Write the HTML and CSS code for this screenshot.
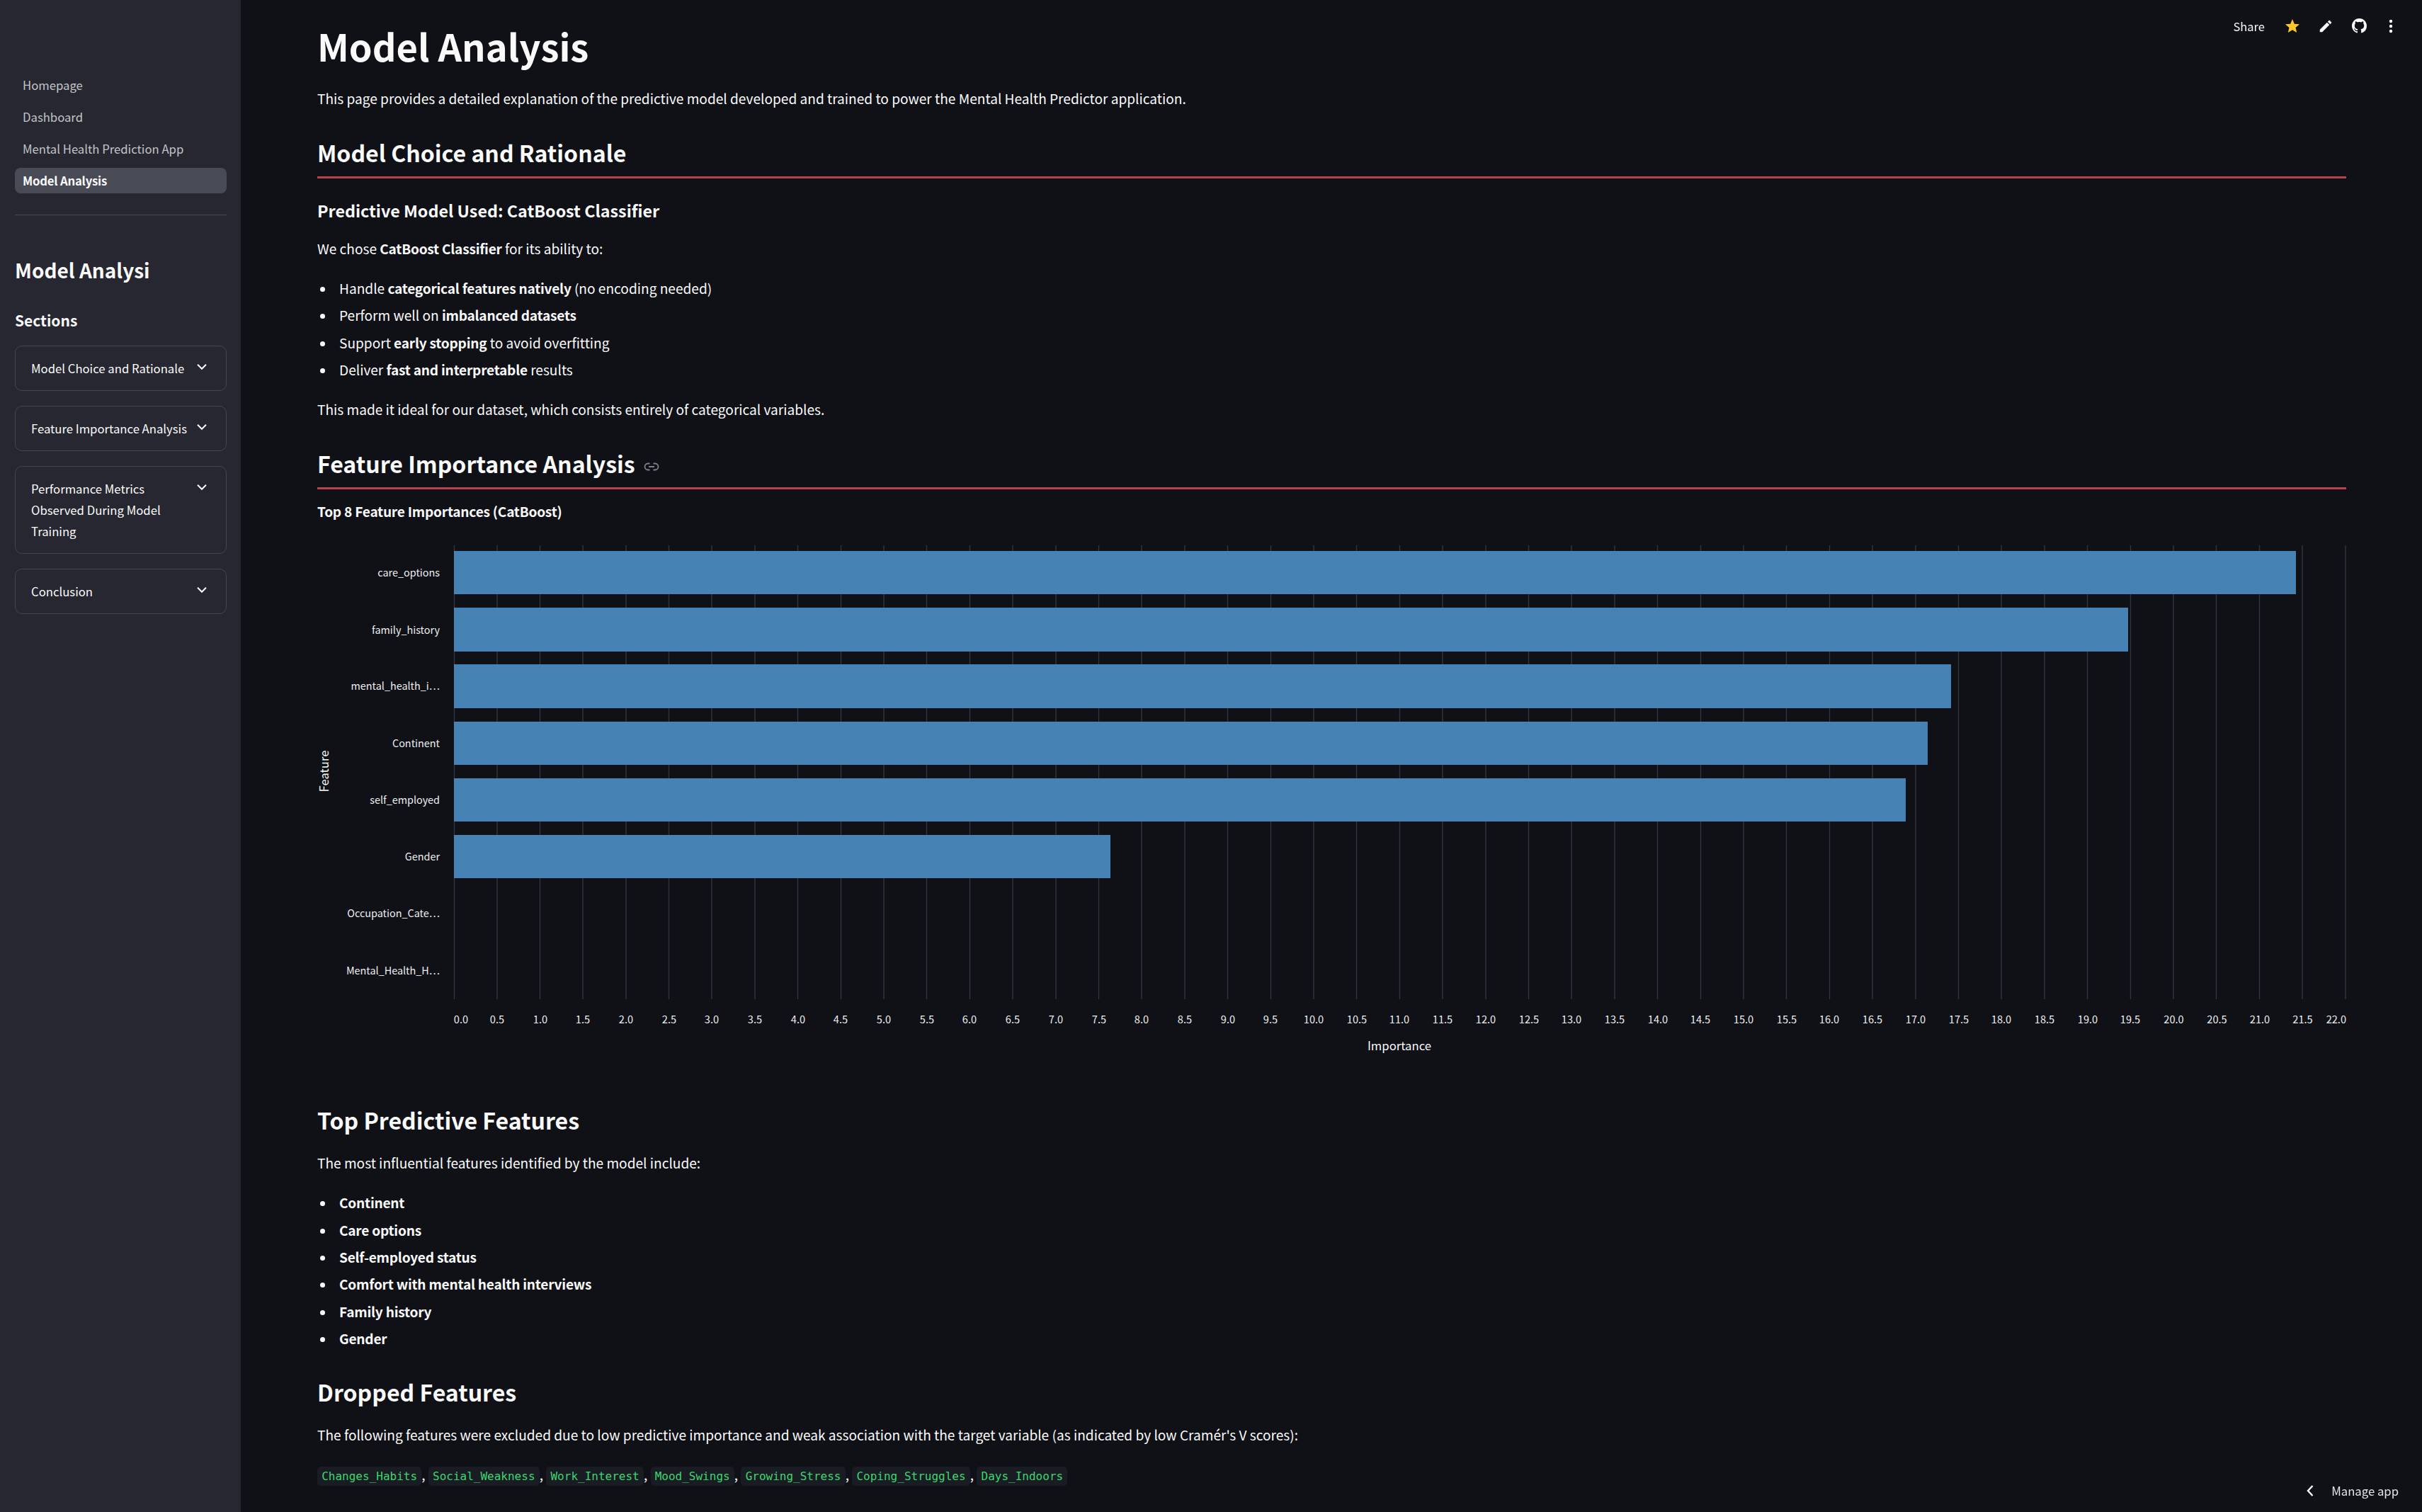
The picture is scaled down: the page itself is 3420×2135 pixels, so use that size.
FILE: index.html
```html
<!DOCTYPE html>
<html lang="en">
<head>
    <meta charset="UTF-8">
    <title>Model Analysis</title>
    <link rel="stylesheet" href="styles.css">
</head>
<body>
    <div class="app">
        <aside class="sidebar">
            <ul class="nav">
                <li class="nav-item">Homepage</li>
                <li class="nav-item">Dashboard</li>
                <li class="nav-item">Mental Health Prediction App</li>
                <li class="nav-item active">Model Analysis</li>
            </ul>
            <div class="nav-line"></div>
            <h2 class="side-title">Model Analysi</h2>
            <h3 class="side-sub">Sections</h3>
            <div class="expander">
                <span>Model Choice and Rationale</span>
                <svg class="chev" viewBox="0 0 24 24"><path d="M5.5 8.5L12 15l6.5-6.5"/></svg>
            </div>
            <div class="expander">
                <span>Feature Importance Analysis</span>
                <svg class="chev" viewBox="0 0 24 24"><path d="M5.5 8.5L12 15l6.5-6.5"/></svg>
            </div>
            <div class="expander">
                <span>Performance Metrics Observed During Model Training</span>
                <svg class="chev" viewBox="0 0 24 24"><path d="M5.5 8.5L12 15l6.5-6.5"/></svg>
            </div>
            <div class="expander">
                <span>Conclusion</span>
                <svg class="chev" viewBox="0 0 24 24"><path d="M5.5 8.5L12 15l6.5-6.5"/></svg>
            </div>
        </aside>

        <main class="main">
            <h1 class="title">Model Analysis</h1>
            <p class="intro">This page provides a detailed explanation of the predictive model developed and trained to power the Mental Health Predictor application.</p>

            <h2 class="head first">Model Choice and Rationale</h2>
            <div class="red-line"></div>
            <h3 class="sub">Predictive Model Used: CatBoost Classifier</h3>
            <p class="after-sub">We chose <b>CatBoost Classifier</b> for its ability to:</p>
            <ul class="points">
                <li>Handle <b>categorical features natively</b> (no encoding needed)</li>
                <li>Perform well on <b>imbalanced datasets</b></li>
                <li>Support <b>early stopping</b> to avoid overfitting</li>
                <li>Deliver <b>fast and interpretable</b> results</li>
            </ul>
            <p class="after-list">This made it ideal for our dataset, which consists entirely of categorical variables.</p>

            <h2 class="head first">Feature Importance Analysis
                <svg class="link-icon" viewBox="0 0 24 24"><path d="M9.5 7.5H7a4.5 4.5 0 0 0 0 9h2.5M14.500 7.500H17a4.500 4.500 0 0 1 0 9h-2.500M8 12h8"/></svg>
            </h2>
            <div class="red-line"></div>
            <p class="chart-title"><b>Top 8 Feature Importances (CatBoost)</b></p>

            <svg class="chart" viewBox="448 760 2865 740">
                <path class="grid" d="M641.500 770V1411M702 770V1411M762.500 770V1411M823 770V1411M884 770V1411M944.500 770V1411M1005 770V1411M1066 770V1411M1126.500 770V1411M1187.500 770V1411M1248 770V1411M1308.500 770V1411M1369.500 770V1411M1430 770V1411M1491 770V1411M1551.500 770V1411M1612 770V1411M1673 770V1411M1733.500 770V1411M1794.500 770V1411M1855 770V1411M1915.500 770V1411M1976.500 770V1411M2037 770V1411M2098 770V1411M2158.500 770V1411M2219 770V1411M2280 770V1411M2340.500 770V1411M2401.500 770V1411M2462 770V1411M2522.500 770V1411M2583.500 770V1411M2644 770V1411M2705 770V1411M2765.500 770V1411M2826 770V1411M2887 770V1411M2947.500 770V1411M3008.500 770V1411M3069 770V1411M3129.500 770V1411M3190.500 770V1411M3251 770V1411M3312 770V1411"/>

                <rect class="bar" x="641" y="778" width="2601" height="61"/>
                <rect class="bar" x="641" y="858" width="2364" height="62"/>
                <rect class="bar" x="641" y="938" width="2114" height="62"/>
                <rect class="bar" x="641" y="1019" width="2081" height="61"/>
                <rect class="bar" x="641" y="1099" width="2050" height="61"/>
                <rect class="bar" x="641" y="1179" width="927" height="61"/>

                <g class="y-labels">
                    <text x="621" y="814">care_options</text>
                    <text x="621" y="895">family_history</text>
                    <text x="621" y="974">mental_health_i…</text>
                    <text x="621" y="1055">Continent</text>
                    <text x="621" y="1135">self_employed</text>
                    <text x="621" y="1215">Gender</text>
                    <text x="621" y="1295">Occupation_Cate…</text>
                    <text x="621" y="1376">Mental_Health_H…</text>
                </g>

                <g class="x-labels">
                    <text x="651" y="1445">0.0</text>
                    <text x="702" y="1445">0.5</text>
                    <text x="763" y="1445">1.0</text>
                    <text x="823" y="1445">1.5</text>
                    <text x="884" y="1445">2.0</text>
                    <text x="945" y="1445">2.5</text>
                    <text x="1005" y="1445">3.0</text>
                    <text x="1066" y="1445">3.5</text>
                    <text x="1127" y="1445">4.0</text>
                    <text x="1187" y="1445">4.5</text>
                    <text x="1248" y="1445">5.0</text>
                    <text x="1309" y="1445">5.5</text>
                    <text x="1369" y="1445">6.0</text>
                    <text x="1430" y="1445">6.5</text>
                    <text x="1491" y="1445">7.0</text>
                    <text x="1552" y="1445">7.5</text>
                    <text x="1612" y="1445">8.0</text>
                    <text x="1673" y="1445">8.5</text>
                    <text x="1734" y="1445">9.0</text>
                    <text x="1794" y="1445">9.5</text>
                    <text x="1855" y="1445">10.0</text>
                    <text x="1916" y="1445">10.5</text>
                    <text x="1976" y="1445">11.0</text>
                    <text x="2037" y="1445">11.5</text>
                    <text x="2098" y="1445">12.0</text>
                    <text x="2159" y="1445">12.5</text>
                    <text x="2219" y="1445">13.0</text>
                    <text x="2280" y="1445">13.5</text>
                    <text x="2341" y="1445">14.0</text>
                    <text x="2401" y="1445">14.5</text>
                    <text x="2462" y="1445">15.0</text>
                    <text x="2523" y="1445">15.5</text>
                    <text x="2583" y="1445">16.0</text>
                    <text x="2644" y="1445">16.5</text>
                    <text x="2705" y="1445">17.0</text>
                    <text x="2766" y="1445">17.5</text>
                    <text x="2826" y="1445">18.0</text>
                    <text x="2887" y="1445">18.5</text>
                    <text x="2948" y="1445">19.0</text>
                    <text x="3008" y="1445">19.5</text>
                    <text x="3069.500" y="1445">20.0</text>
                    <text x="3130.500" y="1445">20.5</text>
                    <text x="3191" y="1445">21.0</text>
                    <text x="3251.500" y="1445">21.5</text>
                    <text class="last-tick" x="3313" y="1445">22.0</text>
                </g>

                <text class="axis-title" x="1976" y="1483">Importance</text>
                <text class="axis-title" transform="translate(464 1089) rotate(-90)">Feature</text>
            </svg>

            <h2 class="head after-chart">Top Predictive Features</h2>
            <p class="after-head">The most influential features identified by the model include:</p>
            <ul class="points">
                <li><b>Continent</b></li>
                <li><b>Care options</b></li>
                <li><b>Self-employed status</b></li>
                <li><b>Comfort with mental health interviews</b></li>
                <li><b>Family history</b></li>
                <li><b>Gender</b></li>
            </ul>

            <h2 class="head after-points">Dropped Features</h2>
            <p class="after-head">The following features were excluded due to low predictive importance and weak association with the target variable (as indicated by low Cramér's V scores):</p>
            <p class="codes"><code>Changes_Habits</code>, <code>Social_Weakness</code>, <code>Work_Interest</code>, <code>Mood_Swings</code>, <code>Growing_Stress</code>, <code>Coping_Struggles</code>, <code>Days_Indoors</code></p>
        </main>
    </div>

    <div class="toolbar">
        <span class="share">Share</span>
        <span class="tool"><svg class="star" viewBox="0 0 24 24"><path d="M12 17.270L18.180 21l-1.640-7.030L22 9.240l-7.190-.610L12 2 9.190 8.630 2 9.240l5.460 4.730L5.820 21z"/></svg></span>
        <span class="tool"><svg class="pencil" viewBox="0 0 24 24"><path d="M3 17.250V21h3.750L17.810 9.940l-3.750-3.750L3 17.250zM20.710 7.040c.39-.39.39-1.020 0-1.410l-2.340-2.340c-.39-.39-1.020-.39-1.410 0l-1.830 1.830 3.750 3.750 1.830-1.830z"/></svg></span>
        <span class="tool"><svg class="github" viewBox="0 0 16 16"><path d="M8 0C3.580 0 0 3.580 0 8c0 3.540 2.290 6.530 5.470 7.590.4.070.55-.17.55-.38 0-.19-.01-.82-.01-1.490-2.010.37-2.530-.49-2.690-.94-.09-.23-.48-.94-.82-1.130-.28-.15-.68-.52-.01-.53.63-.01 1.080.58 1.230.82.72 1.210 1.870.87 2.330.66.07-.52.28-.87.51-1.070-1.780-.2-3.640-.89-3.640-3.950 0-.87.31-1.590.82-2.150-.08-.2-.36-1.020.08-2.120 0 0 .67-.21 2.200.82.64-.18 1.320-.27 2-.27.68 0 1.360.09 2 .27 1.530-1.040 2.200-.82 2.200-.82.44 1.100.16 1.920.08 2.120.51.56.82 1.270.82 2.150 0 3.070-1.870 3.750-3.650 3.950.29.25.54.73.54 1.480 0 1.070-.01 1.930-.01 2.200 0 .21.15.46.55.38A8.013 8.013 0 0016 8c0-4.420-3.580-8-8-8z"/></svg></span>
        <span class="tool tool-dots"><svg class="dots" viewBox="0 0 24 24"><circle cx="12" cy="5" r="2.200"/><circle cx="12" cy="12" r="2.200"/><circle cx="12" cy="19" r="2.200"/></svg></span>
    </div>

    <div class="manage">
        <svg class="manage-chev" viewBox="0 0 12 20"><path d="M9.500 3L3 10l6.500 7"/></svg>
        <span>Manage app</span>
    </div>
</body>
</html>
```
FILE: styles.css
```css
*{
    margin: 0;
    padding: 0;
    box-sizing: border-box;
}
html,body{
    height: 100%;
    overflow: hidden;
}
body{
    background: #0f1117;
    color: #fafafa;
    font-family: "Noto Sans CJK SC", "Noto Sans", sans-serif;
    font-size: 19.100px;
    line-height: 34px;
}
b{
    font-weight: 600;
    letter-spacing: -0.22px;
}
.app{
    display: flex;
    height: 100%;
}

/* sidebar */
.sidebar{
    width: 340px;
    flex-shrink: 0;
    background: #262730;
    padding: 102px 20px 0 21px;
}
.nav{
    list-style: none;
    display: flex;
    flex-direction: column;
    gap: 9px;
}
.nav-item{
    height: 36px;
    padding-left: 11px;
    border-radius: 8px;
    font-size: 16.700px;
    line-height: 36px;
    color: #c3c4c8;
}
.nav-item.active{
    background: #484a56;
    color: #fafafa;
    font-weight: 600;
    letter-spacing: -0.2px;
}
.nav-line{
    height: 1px;
    margin-top: 30px;
    background: #474852;
}
.side-title{
    margin-top: 55px;
    font-size: 28px;
    line-height: 44px;
    font-weight: 600;
}
.side-sub{
    margin-top: 31px;
    font-size: 21px;
    line-height: 36px;
    font-weight: 600;
}
.expander{
    display: flex;
    justify-content: space-between;
    align-items: flex-start;
    margin-bottom: 21px;
    padding: 16px 23px 16px 22px;
    border: 1px solid #44454f;
    border-radius: 10px;
    font-size: 16.700px;
    line-height: 30px;
}
.side-sub + .expander{
    margin-top: 18px;
}
.expander span{
    max-width: 222px;
}
.chev{
    width: 22px;
    height: 22px;
    margin-top: 2px;
    flex-shrink: 0;
    fill: none;
    stroke: #fafafa;
    stroke-width: 2.200;
}

/* main column */
.main{
    flex: 1;
    min-width: 0;
    padding: 26px 107px 0 108px;
}
.title{
    font-size: 52.500px;
    line-height: 76px;
    font-weight: 700;
}
.intro{
    margin-top: 20px;
}
.head{
    font-size: 32.100px;
    line-height: 50px;
    font-weight: 600;
}
.head.first{
    margin-top: 34px;
}
.head.after-chart{
    margin-top: 56px;
}
.head.after-points{
    margin-top: 33px;
}
.link-icon{
    width: 24px;
    height: 24px;
    margin-left: 4px;
    vertical-align: -3px;
    fill: none;
    stroke: #7f8188;
    stroke-width: 1.800;
}
.red-line{
    height: 3px;
    margin-top: 9px;
    background: #b8424a;
}
.sub{
    margin-top: 25px;
    font-size: 23.300px;
    line-height: 40px;
    font-weight: 600;
}
.after-sub{
    margin-top: 17px;
}
.after-list{
    margin-top: 22px;
}
.after-head{
    margin-top: 19px;
}
.points{
    list-style: none;
    margin-top: 22px;
    padding-left: 31px;
}
.points li + li{
    margin-top: 4.400px;
}
.points li::before{
    content: "";
    display: inline-block;
    width: 7px;
    height: 7px;
    margin-left: -27.500px;
    margin-right: 20.500px;
    border-radius: 50%;
    background: #fafafa;
    vertical-align: 3px;
}
.chart-title{
    margin-top: 14px;
}
.codes{
    margin-top: 22px;
}
code{
    display: inline-block;
    height: 27px;
    padding: 0 6.200px;
    border-radius: 5px;
    background: #1a1c24;
    color: #3dd56d;
    font-family: "DejaVu Sans Mono", "Liberation Mono", monospace;
    font-size: 16px;
    line-height: 27px;
}

/* chart */
.chart{
    display: block;
    width: 2865px;
    height: 740px;
    margin-top: 21px;
    overflow: visible;
}
.grid{
    fill: none;
    stroke: #32353d;
    stroke-width: 1.400;
}
.bar{
    fill: #4682b4;
}
.y-labels text{
    fill: #eeeff0;
    font-size: 14.400px;
    text-anchor: end;
}
.x-labels text{
    fill: #eeeff0;
    font-size: 14.600px;
    text-anchor: middle;
}
.x-labels .last-tick{
    text-anchor: end;
}
.axis-title{
    fill: #fafafa;
    font-size: 16.700px;
    text-anchor: middle;
}

/* overlays */
.toolbar{
    position: fixed;
    top: 13px;
    right: 20px;
    display: flex;
    align-items: center;
    height: 47px;
    font-size: 16.500px;
}
.share{
    margin-right: 15px;
}
.tool{
    display: flex;
    align-items: center;
    justify-content: center;
    width: 47.500px;
    height: 47px;
}
.tool-dots{
    margin-left: -3px;
}
.star{
    width: 24px;
    height: 24px;
    fill: #ffc72b;
}
.pencil{
    width: 22px;
    height: 22px;
    fill: #fafafa;
}
.github{
    width: 21px;
    height: 21px;
    fill: #fafafa;
}
.dots{
    width: 24px;
    height: 24px;
    fill: #fafafa;
}
.manage{
    position: fixed;
    right: 33px;
    bottom: 14px;
    display: flex;
    align-items: center;
    gap: 24px;
    font-size: 16.700px;
    line-height: 32px;
    color: #e4e5e7;
}
.manage-chev{
    width: 12px;
    height: 20px;
    fill: none;
    stroke: #fafafa;
    stroke-width: 2.400;
}
```
